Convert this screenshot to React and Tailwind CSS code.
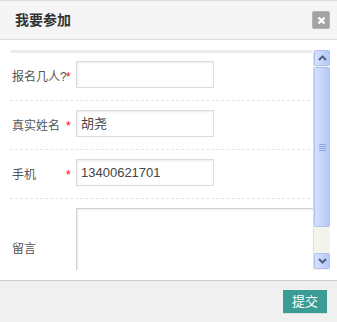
import React from "react";

const font = { fontFamily: '"Liberation Sans", "Noto Sans CJK SC", sans-serif' };

function Chevron({ up }) {
  return (
    <svg width="9" height="6" viewBox="0 0 9 6">
      <polyline
        points={up ? "1,5 4.5,1.5 8,5" : "1,1 4.5,4.5 8,1"}
        fill="none"
        stroke="#4d6185"
        strokeWidth="2"
      />
    </svg>
  );
}

function ScrollBtn({ up }) {
  return (
    <div className="h-[16px] rounded-[2px] border border-[#aec2f1] bg-linear-to-r from-[#d6e1fd] via-[#c6d5fc] to-[#b6c8f5] flex items-center justify-center">
      <Chevron up={up} />
    </div>
  );
}

function Scrollbar() {
  return (
    <div className="w-[16px] flex flex-col bg-[#f4f4ef]">
      <ScrollBtn up />
      <div className="mt-px h-[160px] rounded-[2px] border border-[#aec2f1] bg-linear-to-r from-[#d4e0fd] via-[#c6d5fc] to-[#b6c8f5] flex flex-col items-center justify-center gap-px">
        <div className="w-[7px] h-px bg-[#8ea6e2]" />
        <div className="w-[7px] h-px bg-[#8ea6e2]" />
        <div className="w-[7px] h-px bg-[#8ea6e2]" />
        <div className="w-[7px] h-px bg-[#8ea6e2]" />
      </div>
      <div className="flex-1" />
      <ScrollBtn />
      <div className="h-px" />
    </div>
  );
}

function Field({ label, value, first, big }) {
  return (
    <div
      className={`flex items-center pl-[2px] mr-[3px] ${
        first ? "pt-2" : "pt-[9px]"
      } ${big ? "" : "pb-[12px] border-b border-dashed border-[#e4e4e4]"}`}
    >
      <span
        className={`w-[54px] shrink-0 whitespace-nowrap text-[12px] text-[#555] ${
          big ? "" : "pt-[4px]"
        }`}
      >
        {label}
      </span>
      <span
        className={`w-[10px] shrink-0 text-[12px] leading-none text-[#f00] ${
          big ? "" : "pt-[4px]"
        }`}
      >
        {big ? "" : "*"}
      </span>
      {big ? (
        <div className="w-[262px] h-[82px] shrink-0 border border-[#cfcfcf] bg-white shadow-[inset_1px_1px_2px_rgba(0,0,0,0.08)]" />
      ) : (
        <div className="w-[138px] h-[27px] shrink-0 border border-[#dcdcdc] bg-white shadow-[inset_1px_1px_2px_rgba(0,0,0,0.08)] flex items-center px-[4px] text-[13px] text-[#444]">
          {value}
        </div>
      )}
    </div>
  );
}

export default function App() {
  return (
    <div className="w-[337px] h-[322px] flex flex-col bg-white overflow-hidden" style={font}>
      <div className="h-[40px] shrink-0 bg-[#f5f5f5] border-t border-b border-[#dcdcdc] flex items-center justify-between pl-[15px] pr-[7px]">
        <span className="text-[14px] font-bold text-[#333]">我要参加</span>
        <div className="w-[18px] h-[18px] rounded-[2px] bg-[#a3a3a3] border border-[#b4b4b4] flex items-center justify-center">
          <svg width="9" height="9" viewBox="0 0 9 9">
            <line x1="1.5" y1="1.5" x2="7.5" y2="7.5" stroke="white" strokeWidth="2.4" />
            <line x1="7.5" y1="1.5" x2="1.5" y2="7.5" stroke="white" strokeWidth="2.4" />
          </svg>
        </div>
      </div>

      <div className="flex-1 pt-[10px] pl-[10px] pr-[7px]">
        <div className="flex h-[220px]">
          <div className="w-[303px] flex flex-col overflow-hidden">
            <div className="h-[3px] shrink-0 bg-[#ececec]" />
            <Field first label="报名几人?" value="" />
            <Field label="真实姓名" value="胡尧" />
            <Field label="手机" value="13400621701" />
            <Field big label="留言" />
          </div>
          <div className="w-px mt-[3px] bg-[#dedede]" />
          <Scrollbar />
        </div>
      </div>

      <div className="h-[42px] shrink-0 bg-[#f0f0f0] border-t border-[#cccccc] flex items-center justify-end pr-[10px]">
        <div className="w-[44px] h-[23px] bg-[#3a9d95] text-white text-[13px] flex items-center justify-center shadow-[0_1px_0_rgba(0,0,0,0.08)]">
          提交
        </div>
      </div>
    </div>
  );
}
